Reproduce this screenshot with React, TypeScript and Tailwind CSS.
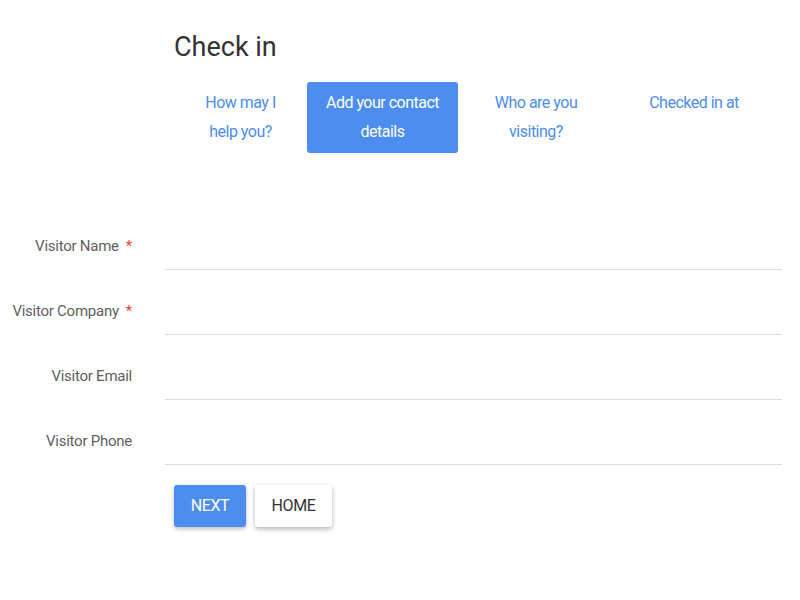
import React from 'react';

const tabs = [
    { label: 'How may I help you?', box: 'w-[133px] px-[26px]', active: false },
    { label: 'Add your contact details', box: 'w-[151px] px-[14px]', active: true },
    { label: 'Who are you visiting?', box: 'w-[156px] px-[30px]', active: false },
    { label: 'Checked in at', box: 'w-[160px] px-[14px]', active: false },
];

const fields = [
    { label: 'Visitor Name', required: true },
    { label: 'Visitor Company', required: true },
    { label: 'Visitor Email', required: false },
    { label: 'Visitor Phone', required: false },
];

export default function App() {
    return (
        <div className="min-h-[600px] w-[800px] bg-white font-['Roboto',sans-serif]">
            <div className="pl-[174px] pt-[28px]">
                <h1 className="text-[27px] leading-[38px] text-[#333]">Check in</h1>
            </div>

            {/* Steps */}
            <div className="flex pl-[174px] mt-[16px]">
                {tabs.map((t) => (
                    <div
                        key={t.label}
                        className={`${t.box} h-[71px] pt-[6px] text-center text-[16px] tracking-[-0.5px] leading-[29px] rounded-[3px] ${t.active ? 'bg-[#4d8def] text-white' : 'text-[#4d8def]'}`}
                    >
                        {t.label}
                    </div>
                ))}
            </div>

            {/* Form */}
            <form className="mt-[53px] pr-[18px]">
                {fields.map((f) => (
                    <div key={f.label} className="flex items-end h-[65px] first:h-[64px]">
                        <label className="w-[132px] shrink-0 text-right text-[15px] tracking-[-0.25px] text-[#5f5f5f] pb-[14px] leading-[20px]">
                            {f.label}
                            {f.required && <span className="text-[#f44336] ml-[7px]">*</span>}
                        </label>
                        <input
                            type="text"
                            className="ml-[33px] flex-1 h-[40px] border-b border-[#ddd] outline-none"
                        />
                    </div>
                ))}
                <div className="flex gap-[9px] pl-[174px] mt-[20px]">
                    <button type="button" className="h-[42px] w-[72px] rounded-[3px] bg-[#4d8def] text-white text-[16px] tracking-[-0.4px] shadow-[0_2px_4px_rgba(0,0,0,0.25)]">
                        NEXT
                    </button>
                    <button type="button" className="h-[42px] w-[77px] rounded-[3px] bg-white text-[#333] text-[16px] tracking-[-0.4px] shadow-[0_2px_5px_rgba(0,0,0,0.3)]">
                        HOME
                    </button>
                </div>
            </form>
        </div>
    );
}
